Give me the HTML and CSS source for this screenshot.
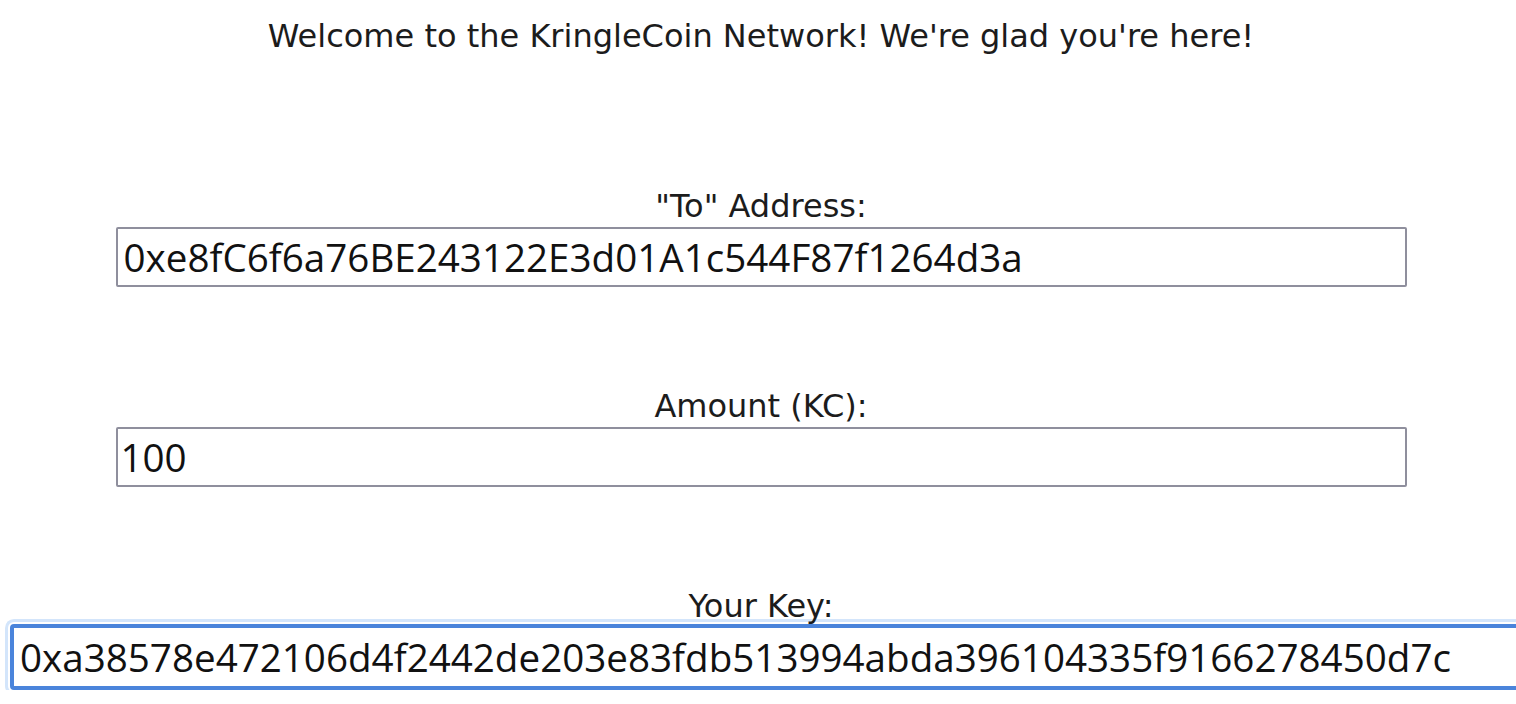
FILE: index.html
```html
<!DOCTYPE html>
<html lang="en">
<head>
  <meta charset="UTF-8">
  <meta name="viewport" content="width=device-width, initial-scale=1.0">
  <title>KringleCoin</title>
  <link rel="stylesheet" href="styles.css">
</head>
<body>

  <div class="page">
    <p class="welcome">Welcome to the KringleCoin Network! We're glad you're here!</p>

    <!-- transfer form -->
    <div class="field">
      <label for="toAddress">"To" Address:</label>
      <input type="text" id="toAddress" class="coinInput" value="0xe8fC6f6a76BE243122E3d01A1c544F87f1264d3a">
    </div>

    <div class="field">
      <label for="amount">Amount (KC):</label>
      <input type="text" id="amount" class="coinInput amountInput" value="100">
    </div>

    <div class="field">
      <label for="yourKey">Your Key:</label>
      <input type="text" id="yourKey" class="coinInput keyInput" value="0xa38578e472106d4f2442de203e83fdb513994abda396104335f9166278450d7c">
    </div>
  </div>

</body>
</html>
```

FILE: styles.css
```css
body {
  margin: 0;
  font-family: 'DejaVu Sans', sans-serif;
  color: #1c1c1c;
  background: #fff;
  overflow: hidden;
}

.page {
  display: flex;
  flex-direction: column;
  align-items: center;
  padding: 18px 0 0 6px;
}

.welcome {
  margin: 0;
  font-size: 32px;
  line-height: 37px;
}

.field {
  display: flex;
  flex-direction: column;
  align-items: center;
  width: 100%;
  margin-top: 133px;
}

.field + .field {
  margin-top: 101px;
}

label {
  position: relative;
  z-index: 1; /* keep the text above the focus ring */
  font-size: 32px;
  line-height: 37px;
  margin-bottom: 2px;
}

.coinInput {
  box-sizing: border-box;
  width: 1291px;
  height: 60px;
  padding: 0 6px;
  border: 2px solid #8f8f9d;
  border-radius: 2px;
  font-family: 'Open Sans', sans-serif;
  font-size: 38.6px;
  color: #111;
  background: #fff;
  outline: none;
}

.amountInput {
  padding-left: 3px;
}

/* the key field is the one with focus */
.keyInput {
  align-self: flex-start;
  width: 1600px;
  height: 66px;
  margin-left: 4px;
  margin-top: -3px;
  padding-left: 6px;
  border: 4px solid #4a84db;
  border-radius: 4px;
  box-shadow: 0 0 0 2px #fff, 0 0 0 5px #d3e5fb;
}
```
